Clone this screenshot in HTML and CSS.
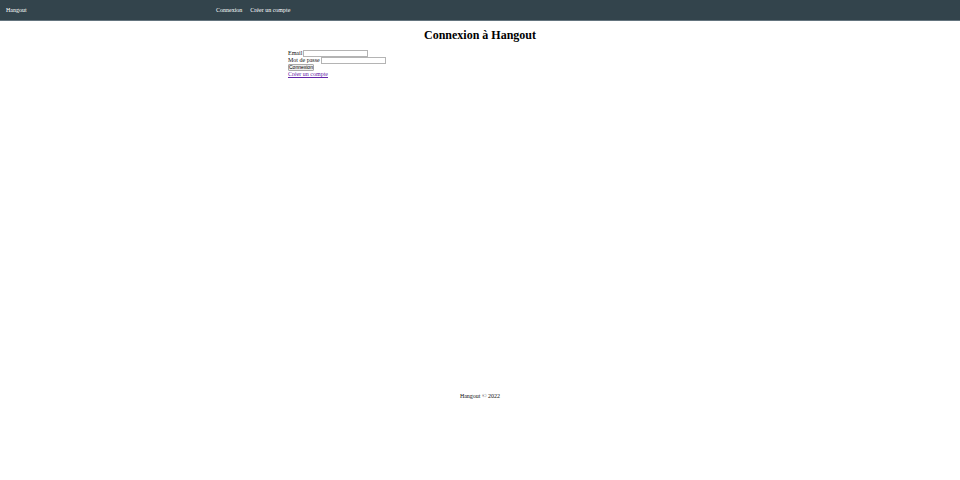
FILE: index.html
```html
<!DOCTYPE html>
<html lang="fr">
<head>
<meta charset="utf-8">
<title>Hangout</title>
<link rel="stylesheet" href="styles.css">
</head>
<body>
<header class="navbar">
  <a class="brand" href="#">Hangout</a>
  <nav class="links">
    <a href="#">Connexion</a>
    <a href="#">Créer un compte</a>
  </nav>
</header>
<main class="content">
  <h1>Connexion à Hangout</h1>
  <form class="login">
    <div class="field"><label for="email">Email</label><input id="email" type="email"></div>
    <div class="field"><label for="password">Mot de passe</label><input id="password" type="password"></div>
    <button type="submit">Connexion</button>
    <a class="signup" href="#">Créer un compte</a>
  </form>
</main>
<footer class="footer">Hangout © 2022</footer>
</body>
</html>
```
FILE: styles.css
```css
body {
  margin: 0;
  background: #fff;
  color: #111;
  font: 6px/7px "Liberation Serif", "Times New Roman", serif;
}

.navbar {
  display: grid;
  grid-template-columns: 22.5% 1fr;
  align-items: center;
  padding: 6px 0;
  border-bottom: 1px solid #64747e;
  background: #33444c;
  line-height: 8px;
}

.navbar a {
  color: #fff;
  text-decoration: none;
}

.brand {
  padding-left: 6px;
}

.links {
  display: flex;
  gap: 8px;
}

.content {
  width: 40%;
  min-height: 363px;
  margin: 0 auto;
  padding-top: 8px;
  box-sizing: border-box;
}

h1 {
  margin: 0 0 8px;
  color: #000;
  font-size: 12px;
  line-height: 13px;
  text-align: center;
}

.login {
  display: flex;
  flex-direction: column;
  align-items: flex-start;
}

.field {
  display: flex;
  gap: 1px;
}

input {
  box-sizing: border-box;
  width: 65px;
  height: 7px;
  margin: 0;
  padding: 0 1px;
  border: 1px solid #b4b4b4;
  background: #fff;
  font: 5px/5px "Liberation Sans", Arial, sans-serif;
}

button {
  height: 7px;
  margin: 0;
  padding: 0;
  border: 1px solid #aaa;
  border-radius: 1px;
  background: #efefef;
  color: #000;
  font: 5px/5px "Liberation Sans", Arial, sans-serif;
}

.signup {
  color: #6426a8;
}

.footer {
  padding: 8px;
  line-height: 8px;
  text-align: center;
}
```
